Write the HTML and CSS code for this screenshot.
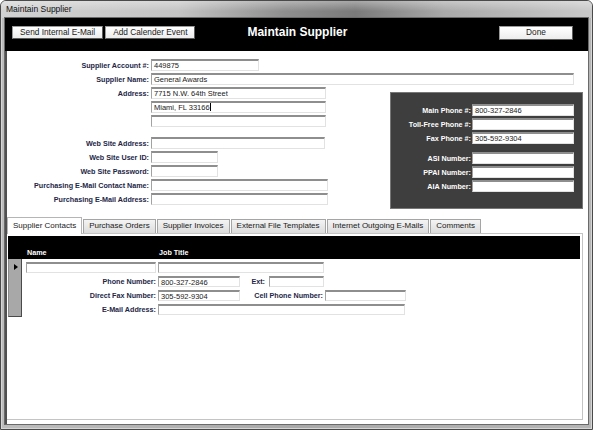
FILE: index.html
```html
<!DOCTYPE html>
<html>
<head>
<meta charset="utf-8">
<link rel="stylesheet" href="styles.css">
</head>
<body>
<div class="window">
  <div class="titlebar">Maintain Supplier</div>
  <div class="client">
    <div class="header">
      <div class="btn">Send Internal E-Mail</div>
      <div class="btn">Add Calender Event</div>
      <div class="title">Maintain Supplier</div>
      <div class="btn done">Done</div>
    </div>
    <div class="body">
      <div class="top">
        <div class="row"><span class="lbl">Supplier Account #:</span><span class="fld w-acct">449875</span></div>
        <div class="row"><span class="lbl">Supplier Name:</span><span class="fld w-name">General Awards</span></div>
        <div class="split">
          <div class="leftcol">
            <div class="row"><span class="lbl">Address:</span><span class="fld w-addr">7715 N.W. 64th Street</span></div>
            <div class="row"><span class="lbl"></span><span class="fld w-addr">Miami, FL 33166<span class="caret"></span></span></div>
            <div class="row"><span class="lbl"></span><span class="fld w-addr"></span></div>
            <div class="row gap"><span class="lbl">Web Site Address:</span><span class="fld w-web"></span></div>
            <div class="row"><span class="lbl">Web Site User ID:</span><span class="fld w-short"></span></div>
            <div class="row"><span class="lbl">Web Site Password:</span><span class="fld w-short"></span></div>
            <div class="row"><span class="lbl">Purchasing E-Mail Contact Name:</span><span class="fld w-purch"></span></div>
            <div class="row"><span class="lbl">Purchasing E-Mail Address:</span><span class="fld w-purch"></span></div>
          </div>
          <div class="panel">
            <div class="prow"><span class="plbl">Main Phone #:</span><span class="fld w-panel">800-327-2846</span></div>
            <div class="prow"><span class="plbl">Toll-Free Phone #:</span><span class="fld w-panel"></span></div>
            <div class="prow"><span class="plbl">Fax Phone #:</span><span class="fld w-panel">305-592-9304</span></div>
            <div class="prow pgap"><span class="plbl">ASI Number:</span><span class="fld w-panel"></span></div>
            <div class="prow"><span class="plbl">PPAI Number:</span><span class="fld w-panel"></span></div>
            <div class="prow"><span class="plbl">AIA Number:</span><span class="fld w-panel"></span></div>
          </div>
        </div>
      </div>
      <div class="tabs">
        <div class="tab active">Supplier Contacts</div>
        <div class="tab">Purchase Orders</div>
        <div class="tab">Supplier Invoices</div>
        <div class="tab">External File Templates</div>
        <div class="tab">Internet Outgoing E-Mails</div>
        <div class="tab">Comments</div>
      </div>
      <div class="page">
        <div class="colhead">
          <span class="ch-name">Name</span>
          <span class="ch-job">Job Title</span>
        </div>
        <div class="detail">
          <div class="selector"><span class="arrow"></span></div>
          <div class="dfields">
            <div class="drow"><span class="fld w-cname"></span><span class="fld w-job"></span></div>
            <div class="drow"><span class="dlbl">Phone Number:</span><span class="fld w-phone">800-327-2846</span><span class="dlbl l-ext">Ext:</span><span class="fld w-ext"></span></div>
            <div class="drow"><span class="dlbl">Direct Fax Number:</span><span class="fld w-phone">305-592-9304</span><span class="dlbl l-cell">Cell Phone Number:</span><span class="fld w-cell"></span></div>
            <div class="drow"><span class="dlbl">E-Mail Address:</span><span class="fld w-email"></span></div>
          </div>
        </div>
      </div>
    </div>
  </div>
</div>
</body>
</html>
```
FILE: styles.css
```css
html, body {
  margin: 0;
  padding: 0;
  background: #ffffff;
}
body {
  font-family: "Liberation Sans", Arial, sans-serif;
}
.window {
  width: 593px;
  height: 430px;
  box-sizing: border-box;
  display: flex;
  flex-direction: column;
  border: 1px solid #4a4a4a;
  border-radius: 6px 6px 0 0;
  background: linear-gradient(to right, #bdbdbd, #a9a9a9 50%, #b5b5b5);
  box-shadow: inset 0 0 0 1px #d6d6d6;
}
.titlebar {
  height: 17px;
  flex: none;
  padding-left: 5px;
  font-size: 8.5px;
  line-height: 17px;
  color: #111;
  border-radius: 5px 5px 0 0;
  background:
    linear-gradient(to bottom, rgba(255,255,255,0.35), rgba(255,255,255,0) 60%),
    linear-gradient(to right, #d2d2d2 0%, #c4c4c4 30%, #8e8e8e 48%, #7a7a7a 60%, #a9a9a9 75%, #c9c9c9 100%);
}
.client {
  flex: 1;
  margin: 0 4px 5px;
  display: flex;
  flex-direction: column;
  background: #fff;
  box-shadow: 0 0 0 1px #6a6a6a;
}
.header {
  height: 33px;
  flex: none;
  background: #000;
  display: flex;
  align-items: flex-start;
  padding: 8px 15px 0 7px;
  box-sizing: border-box;
}
.btn {
  height: 13px;
  box-sizing: border-box;
  padding: 0 7px;
  font-size: 8.3px;
  line-height: 11px;
  color: #1a1a1a;
  background: linear-gradient(#ffffff, #ececec);
  border: 1px solid #9a9a9a;
  border-right-color: #5c5c5c;
  border-bottom-color: #5c5c5c;
  margin-right: 2px;
  white-space: nowrap;
}
.title {
  margin-left: 50px;
  color: #fff;
  font-weight: bold;
  font-size: 12px;
  line-height: 13px;
  margin-top: 0;
}
.btn.done {
  margin-left: auto;
  margin-right: 0;
  width: 74px;
  height: 14px;
  text-align: center;
}
.body {
  flex: 1;
  display: flex;
  flex-direction: column;
  border-left: 2px solid #505050;
}
.top {
  padding-top: 8px;
}
.row {
  display: flex;
  align-items: center;
  height: 12px;
  margin-bottom: 2px;
}
.row.gap {
  margin-top: 10px;
}
.lbl {
  width: 142px;
  margin-right: 2px;
  text-align: right;
  font-size: 7.2px;
  font-weight: bold;
  color: #1d2747;
  white-space: nowrap;
}
.fld {
  display: block;
  height: 12px;
  box-sizing: border-box;
  background: #fff;
  border-top: 2px solid #8e8e8e;
  border-left: 1px solid #a2a2a2;
  border-right: 1px solid #e2e2e2;
  border-bottom: 1px solid #e2e2e2;
  padding-left: 2px;
  font-size: 7.5px;
  line-height: 9px;
  color: #1a1a1a;
  white-space: nowrap;
  overflow: hidden;
}
.caret {
  display: inline-block;
  width: 1px;
  height: 8px;
  background: #000;
  vertical-align: -1px;
}
.w-acct { width: 108px; }
.w-name { width: 423px; }
.w-addr { width: 175px; }
.w-web { width: 174px; }
.w-short { width: 67px; }
.w-purch { width: 177px; }
.split {
  display: flex;
  align-items: flex-start;
}
.leftcol {
  width: 323px;
}
.panel {
  margin-left: 60px;
  margin-top: 5px;
  width: 193px;
  height: 117px;
  box-sizing: border-box;
  padding-top: 11px;
  background: #3e3e3e;
  border: 1px solid #777;
}
.prow {
  display: flex;
  align-items: center;
  height: 12px;
  margin-bottom: 2px;
}
.prow.pgap {
  margin-top: 8px;
}
.plbl {
  width: 80px;
  margin-right: 1px;
  text-align: right;
  font-size: 7.2px;
  font-weight: bold;
  color: #fff;
  white-space: nowrap;
}
.w-panel { width: 102px; }
.tabs {
  display: flex;
  align-items: flex-end;
  height: 16px;
  margin-top: 8px;
  position: relative;
  z-index: 1;
}
.tab {
  height: 14px;
  box-sizing: border-box;
  padding: 0 5px;
  font-size: 8px;
  line-height: 12px;
  color: #1a1a1a;
  white-space: nowrap;
  background: linear-gradient(#f4f4f4, #dcdcdc);
  border: 1px solid #a5a5a5;
  border-bottom: none;
  margin-right: 1px;
}
.tab.active {
  height: 17px;
  margin-bottom: -1px;
  background: #fff;
  line-height: 15px;
  border-color: #b5b5b5;
}
.page {
  flex: 1;
  margin: 0 5px 4px 0;
  border: 1px solid #c4c4c4;
  border-left: none;
  padding: 2px 2px 0 1px;
}
.colhead {
  height: 23px;
  box-sizing: border-box;
  background: #000;
  display: flex;
  align-items: flex-end;
  padding: 0 0 2px 19px;
  font-size: 7.2px;
  font-weight: bold;
  color: #fff;
  line-height: 9px;
}
.ch-name { width: 132px; }
.detail {
  display: flex;
  align-items: flex-start;
}
.selector {
  width: 14px;
  height: 58px;
  box-sizing: border-box;
  background: #a8a8a8;
  border-left: 1px solid #8a8a8a;
  border-right: 1px solid #4a4a4a;
  border-bottom: 1px solid #4a4a4a;
  padding: 5px 0 0 5px;
}
.arrow {
  display: block;
  width: 0;
  height: 0;
  border-top: 3px solid transparent;
  border-bottom: 3px solid transparent;
  border-left: 4px solid #000;
}
.dfields {
  padding: 3px 0 0 4px;
}
.drow {
  display: flex;
  align-items: center;
  height: 11px;
  margin-bottom: 3px;
}
.drow .fld { height: 11px; }
.dlbl {
  width: 130px;
  margin-right: 2px;
  text-align: right;
  font-size: 7.2px;
  font-weight: bold;
  color: #1d2747;
  white-space: nowrap;
}
.w-cname { width: 130px; margin-right: 2px; }
.w-job { width: 166px; }
.w-phone { width: 82px; }
.dlbl.l-ext { width: 25px; margin-right: 4px; }
.w-ext { width: 55px; }
.dlbl.l-cell { width: 83px; margin-right: 2px; }
.w-cell { width: 81px; }
.w-email { width: 247px; }
```
